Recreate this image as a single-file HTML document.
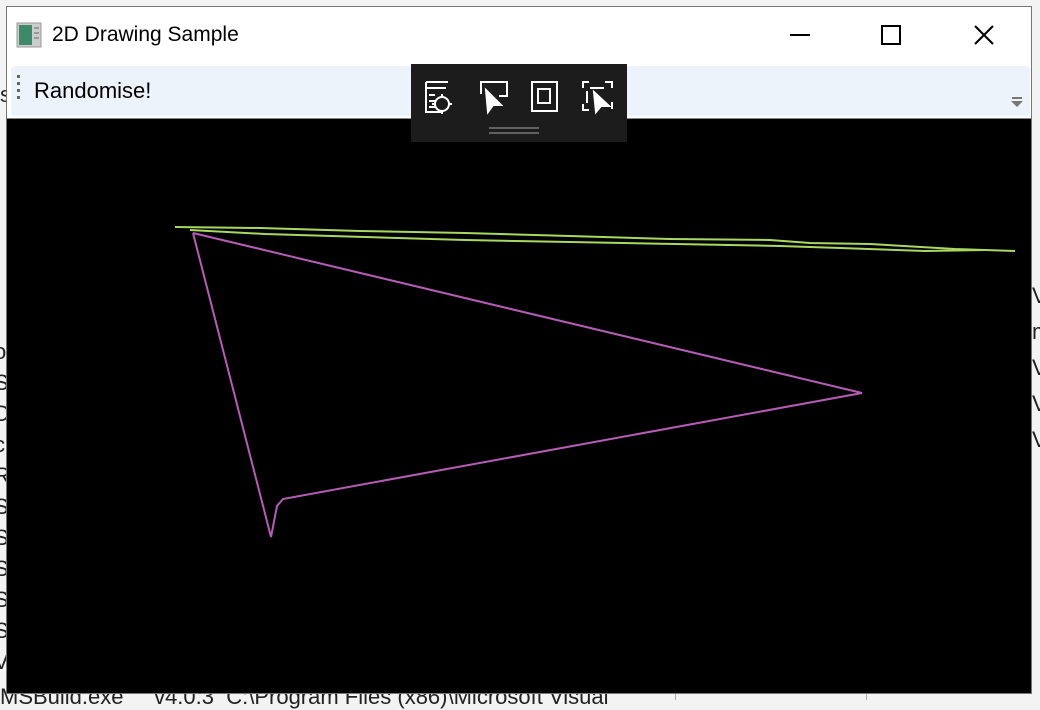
<!DOCTYPE html>
<html><head><style>
html,body{margin:0;padding:0;width:1040px;height:700px;overflow:hidden;background:#f3f3f3;font-family:"Liberation Sans",sans-serif;}
.win{position:absolute;left:6px;top:6px;width:1026px;height:688px;background:#fff;border:1px solid #777;box-sizing:border-box;}
.title{position:absolute;left:52px;top:23px;font-size:21px;color:#000;}
.tb{position:absolute;left:11px;top:66px;width:1019px;height:50px;background:#edf3fb;border-radius:4px;}
.canvas{position:absolute;left:7px;top:118px;width:1024px;height:574px;background:#000;border-top:1px solid #888;}
.dt{position:absolute;left:411px;top:64px;width:216px;height:78px;background:#1c1c1c;}
.bg{position:absolute;font-size:22px;color:#222;}
</style></head><body>
<div class="bg" style="left:0;top:82px">s</div>
<div class="bg" style="left:-6px;top:336px;line-height:31px">o<br>S<br>D<br>c<br>R<br>S<br>S<br>S<br>S<br>S<br>V</div>
<div class="bg" style="left:1032px;top:278px;line-height:36px">V<br>m<br>V<br>V<br>V</div>
<div class="bg" style="left:0;top:684px;white-space:pre">MSBuild.exe     v4.0.3  C:\Program Files (x86)\Microsoft Visual</div>
<div style="position:absolute;left:675px;top:692px;width:1px;height:8px;background:#aaa"></div>
<div style="position:absolute;left:866px;top:692px;width:1px;height:8px;background:#aaa"></div>
<div class="win"></div>
<svg style="position:absolute;left:16px;top:22px" width="26" height="26"><rect x="1" y="1" width="24" height="24" fill="#ccc" stroke="#999"/><rect x="3" y="3" width="13" height="20" fill="#3c8a6a"/><rect x="18" y="5" width="5" height="2" fill="#999"/><rect x="18" y="10" width="5" height="2" fill="#999"/><rect x="18" y="15" width="5" height="2" fill="#999"/></svg>
<div class="title">2D Drawing Sample</div>
<svg style="position:absolute;left:780px;top:20px" width="230" height="30" stroke="#000" stroke-width="2" fill="none"><line x1="10" y1="15" x2="30" y2="15"/><rect x="102" y="6" width="18" height="18"/><line x1="195" y1="6" x2="213" y2="24"/><line x1="213" y1="6" x2="195" y2="24"/></svg>
<div class="tb"></div>
<svg style="position:absolute;left:16px;top:74px" width="8" height="30" fill="#666"><rect x="1" y="1" width="3" height="3"/><rect x="1" y="8" width="3" height="3"/><rect x="1" y="15" width="3" height="3"/><rect x="1" y="22" width="3" height="3"/></svg>
<div style="position:absolute;left:34px;top:78px;font-size:22px;">Randomise!</div>
<svg style="position:absolute;left:1010px;top:96px" width="14" height="14" fill="#777"><rect x="2" y="1" width="10" height="2"/><path d="M1 5h12l-6 6z"/></svg>
<div class="canvas"></div>
<svg style="position:absolute;left:0;top:0" width="1040" height="700" fill="none">
<polyline stroke="#a8d860" stroke-width="2" points="175,227 260,228 360,231 465,233 570,236 670,239 770,240 810,243 870,244 955,249 1015,251"/>
<polyline stroke="#a8d860" stroke-width="2" points="190,230 265,234 365,237 465,240 570,242 675,244 780,246 840,248 925,251 985,250"/>
<polyline stroke="#b65cb6" stroke-width="2" points="193,233 862,393 283,499 277,506 271,537 193,233"/>
</svg>
<div class="dt"></div>
<svg style="position:absolute;left:411px;top:64px" width="216" height="78" stroke="#fff" stroke-width="2" fill="none">
<path d="M15 18h22M15 18v30h16M15 24h20M18 31h6M18 37h6M18 43h6"/><circle cx="31" cy="40" r="7"/><path d="M31 30v4M31 46v4M21 40h4M37 40h4"/>
<path d="M70 30V18h26v14h-8"/><path d="M75 26l2 22 5-7 8 0z" fill="#fff"/>
<rect x="121" y="18" width="25" height="29"/><rect x="127" y="25" width="12" height="14"/>
<path d="M172 24v-6h6M194 18h7v6M172 40v6h6M201 38v7"/><path d="M176 27v12M179 24h14"/><path d="M183 28l2 20 5-6 8 0z" fill="#fff"/>
<path d="M78 64h50M78 69h50" stroke="#777" stroke-width="1.5"/>
</svg>
</body></html>
